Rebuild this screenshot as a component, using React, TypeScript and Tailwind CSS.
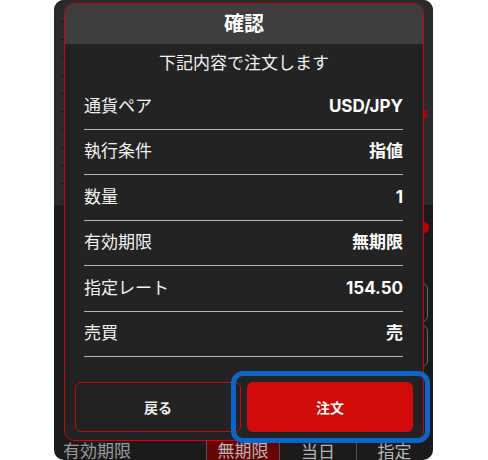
import React from 'react';

const ROWS: { label: string; value: string }[] = [
  { label: '通貨ペア', value: 'USD/JPY' },
  { label: '執行条件', value: '指値' },
  { label: '数量', value: '1' },
  { label: '有効期限', value: '無期限' },
  { label: '指定レート', value: '154.50' },
  { label: '売買', value: '売' },
];

const TICKS = Array.from({ length: 11 });

export default function App() {
  return (
    <div className="relative w-[488px] h-[460px] bg-white font-['Inter','Noto_Sans_CJK_JP',sans-serif] overflow-hidden">
      {/* Phone screen behind the dialog */}
      <div className="ml-[54px] w-[379px] h-[460px] relative overflow-hidden rounded-[10px] flex flex-col bg-[#1b1b1b]">
        {/* Chart area */}
        <div className="h-[205px] bg-[#2a2a2a] flex justify-between">
          <div className="w-[10px] flex flex-col items-end pt-[21px] gap-[17px]">
            {TICKS.map((_, i) => (
              <div key={i} className="w-[3px] h-px bg-[#151515]" />
            ))}
          </div>
          <div className="w-[9px] flex flex-col">
            <div className="mt-[110px] w-[3px] h-[8px] bg-[#b00000]" />
          </div>
        </div>

        {/* Order panel */}
        <div className="flex-1 bg-[#1b1b1b] flex justify-end">
          <div className="w-[9px] flex flex-col">
            <div className="mt-[17px] -ml-[3px] w-[8px] h-[11px] rounded-r-full bg-[#c00000]" />
            <div className="mt-[50px] -ml-[10px] w-[14px] h-[39px] rounded-r-[6px] border border-[#666]" />
            <div className="mt-[3px] -ml-[10px] w-[14px] h-[42px] rounded-r-[6px] border border-[#666]" />
          </div>
        </div>

        {/* Bottom row */}
        <div className="h-[20px] flex items-start">
          <div className="w-[152px] pl-[9px] text-[17px] leading-[24px] -mt-[1px] text-[#9a9a9a]">有効期限</div>
          <div className="flex h-[20px] border-l border-[#555] text-[17px] leading-[24px] text-[#b5b5b5]">
            <div className="w-[72px] bg-[#6a0404] text-center -mt-px">無期限</div>
            <div className="w-[77px] border-l border-[#555] text-center">当日</div>
            <div className="w-[76px] border-l border-[#555] text-center">指定</div>
          </div>
        </div>

        {/* Confirm dialog */}
        <div className="absolute left-[10px] top-[3px] w-[360px] h-[438px] rounded-[10px] border border-[#c8090c] bg-[#232323] overflow-hidden flex flex-col">
          <div className="h-[40px] shrink-0 bg-[#3e3e3e] flex items-center justify-center text-[20px] font-bold text-white">
            確認
          </div>
          <div className="h-[40px] shrink-0 flex items-center justify-center text-[17px] text-[#f2f2f2]">
            下記内容で注文します
          </div>
          <div className="pl-[19px] pr-[20px] flex flex-col">
            {ROWS.map((r) => (
              <div
                key={r.label}
                className="h-[45.5px] flex items-center justify-between border-b-[1.5px] border-[#b4b4b4] text-[17px] text-[#f2f2f2]"
              >
                <span>{r.label}</span>
                <span className="font-bold text-white">{r.value}</span>
              </div>
            ))}
          </div>
          <div className="mt-auto px-[10px] pb-[8px] flex gap-[6px]">
            <button className="w-[166px] h-[50px] rounded-[6px] border border-[#c8090c] bg-[#232323] text-[14px] font-bold text-[#eeeeee]">
              戻る
            </button>
            <button className="w-[166px] h-[50px] rounded-[6px] bg-[#d20a0a] text-[14px] font-bold text-white">
              注文
            </button>
          </div>
        </div>
      </div>

      {/* Blue highlight around the order button */}
      <div className="absolute left-[231px] top-[371px] w-[199px] h-[72px] rounded-[12px] border-[5px] border-[#0a66cc]" />
    </div>
  );
}
